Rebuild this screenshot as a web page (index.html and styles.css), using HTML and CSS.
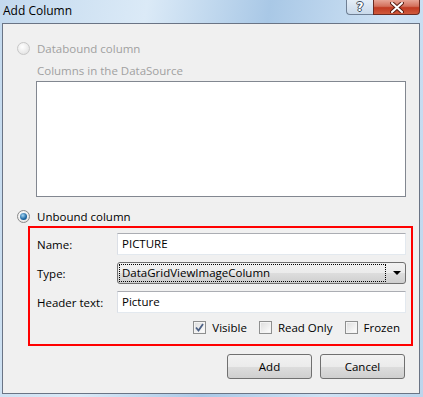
FILE: index.html
```html
<!DOCTYPE html>
<html lang="en">

<head>
    <meta charset="UTF-8">
    <title>Add Column</title>
    <link rel="stylesheet" href="styles.css">
</head>

<body>
    <div class="window">
        <div class="titlebar">
            <span class="title">Add Column</span>
            <div class="caption-buttons">
                <div class="cap-btn help">?</div>
                <div class="cap-btn close">
                    <svg width="14" height="11" viewBox="0 0 14 11">
                        <path d="M2 1 L12 10 M12 1 L2 10" stroke="#5a1f14" stroke-width="4" stroke-linecap="round" fill="none"/>
                        <path d="M2 1 L12 10 M12 1 L2 10" stroke="#ffffff" stroke-width="2" stroke-linecap="round" fill="none"/>
                    </svg>
                </div>
            </div>
        </div>

        <div class="client">
            <div class="radio-row disabled">
                <span class="radio"></span>
                <span>Databound column</span>
            </div>
            <div class="sub-label disabled">Columns in the DataSource</div>
            <div class="listbox"></div>

            <div class="radio-row unbound">
                <span class="radio checked"></span>
                <span>Unbound column</span>
            </div>

            <div class="highlight">
                <div class="field">
                    <label>Name:</label>
                    <div class="textbox">PICTURE</div>
                </div>
                <div class="field">
                    <label>Type:</label>
                    <div class="combo">
                        <span class="focus-rect">DataGridViewImageColumn</span>
                        <span class="arrow"></span>
                    </div>
                </div>
                <div class="field">
                    <label>Header text:</label>
                    <div class="textbox">Picture</div>
                </div>
                <div class="checks">
                    <div class="check-item"><span class="checkbox checked">
                        <svg width="11" height="11" viewBox="0 0 11 11"><path d="M2 5.5 L4.5 8.5 L9 2" stroke="#4d6185" stroke-width="1.8" fill="none"/></svg>
                    </span>Visible</div>
                    <div class="check-item"><span class="checkbox"></span>Read Only</div>
                    <div class="check-item"><span class="checkbox"></span>Frozen</div>
                </div>
            </div>

            <div class="buttons">
                <button class="btn">Add</button>
                <button class="btn">Cancel</button>
            </div>
        </div>
    </div>
</body>

</html>
```

FILE: styles.css
```css
body {
    margin: 0;
    font-family: "Open Sans", "Noto Sans", sans-serif;
    font-size: 11.5px;
}

.window {
    width: 423px;
    height: 397px;
    box-sizing: border-box;
    padding: 0 3px 3px 2px;
    background: linear-gradient(100deg, #c3d9ee 0%, #dbeaf7 30%, #a9c8e6 55%, #cfe2f4 80%, #bcd5ec 100%);
    display: flex;
    flex-direction: column;
}

.titlebar {
    height: 23px;
    display: flex;
    justify-content: space-between;
    align-items: flex-start;
}

.title {
    margin-left: 1px;
    margin-top: 2px;
    font-size: 12px;
    color: #000;
}

.caption-buttons {
    display: flex;
}

.cap-btn {
    height: 14px;
    border: 1px solid #6f7f94;
    border-top: none;
    display: flex;
    align-items: center;
    justify-content: center;
}

/* glyph drawn white with a dark rim, like the aero caption buttons */
.help {
    width: 26px;
    border-radius: 0 0 0 4px;
    border-right: none;
    background: linear-gradient(#e4edf7, #c9d9ea);
    color: #fff;
    font-family: "DejaVu Sans", sans-serif;
    font-weight: bold;
    font-size: 12px;
    line-height: 14px;
    text-shadow: 1px 0 0 #3d4b5c, -1px 0 0 #3d4b5c, 0 1px 0 #3d4b5c, 0 -1px 0 #3d4b5c;
}

.close {
    width: 45px;
    border-radius: 0 0 4px 0;
    background: linear-gradient(#e7a596, #d3705c 45%, #c13a22 55%, #d05a3c);
    border-color: #6b2b22;
}

.client {
    flex: 1;
    background: #f0f0f0;
    border: 1px solid #6a7485;
    padding-top: 16px;
}

.disabled {
    color: #a0a0a0;
}

.radio-row {
    height: 16px;
    display: flex;
    align-items: center;
    padding-left: 14px;
}

.radio {
    width: 11px;
    height: 11px;
    border-radius: 50%;
    border: 1px solid #c7c7c7;
    background: radial-gradient(circle at 40% 35%, #ffffff, #dcdcdc);
    margin-right: 7px;
    position: relative;
}

.radio.checked {
    border-color: #8a8a8a;
    background: radial-gradient(circle at 40% 35%, #ffffff, #e0e0e0);
}

.radio.checked::after {
    content: "";
    position: absolute;
    left: 2px;
    top: 2px;
    width: 7px;
    height: 7px;
    border-radius: 50%;
    background: radial-gradient(circle at 40% 35%, #a6d6f3, #1b66a2 60%, #0d3f6e);
}

.sub-label {
    height: 16px;
    line-height: 16px;
    margin-top: 7px;
    padding-left: 34px;
}

.listbox {
    margin: 2px 0 0 33px;
    width: 368px;
    height: 114px;
    background: #fff;
    border: 1px solid #828790;
}

.unbound {
    margin-top: 11px;
}

.highlight {
    margin: 2px 0 0 25px;
    width: 381px;
    height: 111px;
    border: 2px solid #ff0000;
    padding: 5px 0 0 0;
    display: flex;
    flex-direction: column;
    gap: 7px;
}

.field {
    display: flex;
    align-items: center;
    padding-left: 7px;
    height: 22px;
}

.field label {
    width: 80px;
}

.textbox {
    width: 283px;
    height: 20px;
    line-height: 20px;
    padding-left: 4px;
    background: #fff;
    border: 1px solid #e3e9ef;
    border-top-color: #abadb3;
    border-left-color: #dbdfe6;
}

.combo {
    width: 287px;
    height: 20px;
    border: 1px solid #707070;
    border-radius: 3px;
    background: linear-gradient(#f2f2f2 0%, #ebebeb 50%, #dddddd 51%, #cfcfcf 100%);
    display: flex;
    align-items: center;
}

.focus-rect {
    width: 263px;
    height: 16px;
    line-height: 16px;
    margin-left: 1px;
    padding-left: 2px;
    border: 1px dotted #000;
}

.arrow {
    margin-left: 7px;
    width: 0;
    height: 0;
    border-left: 4px solid transparent;
    border-right: 4px solid transparent;
    border-top: 4px solid #000;
}

.checks {
    margin-top: -1px;
    height: 16px;
    display: flex;
    justify-content: flex-end;
    align-items: center;
    gap: 12px;
    padding-right: 11px;
}

.check-item {
    display: flex;
    align-items: center;
}

.checkbox {
    width: 11px;
    height: 11px;
    border: 1px solid #8e8f8f;
    background: linear-gradient(135deg, #dcdcdc, #ffffff);
    box-shadow: inset 0 0 0 1px #f4f4f4;
    margin-right: 6px;
    display: flex;
}

.buttons {
    display: flex;
    justify-content: flex-end;
    gap: 8px;
    margin-top: 8px;
    padding-right: 14px;
}

.btn {
    width: 85px;
    height: 25px;
    font-family: inherit;
    font-size: 11.5px;
    color: #000;
    border: 1px solid #707070;
    border-radius: 3px;
    background: linear-gradient(#f2f2f2 0%, #ebebeb 50%, #dddddd 51%, #cfcfcf 100%);
    padding: 0;
}
```
